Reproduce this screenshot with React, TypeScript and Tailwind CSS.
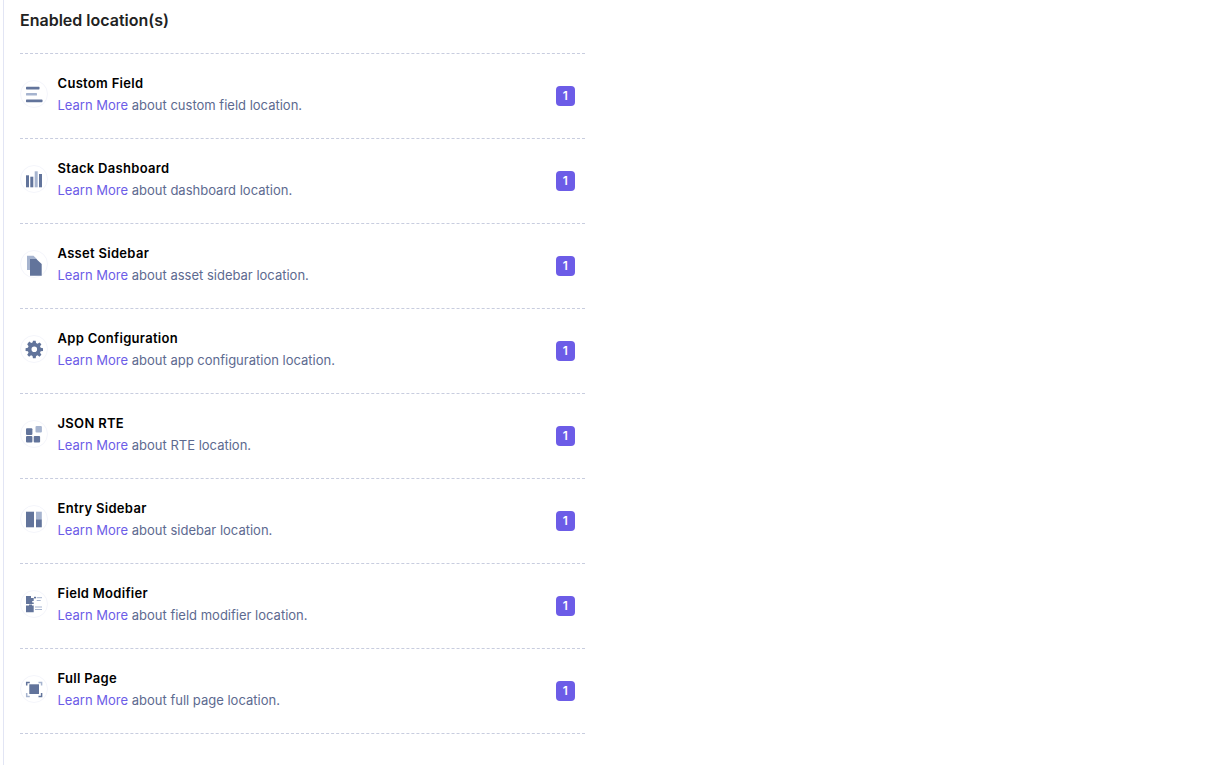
const dark = "#62749b";
const light = "#a6b4cf";

const icons: Record<string, React.ReactNode> = {
  field: (
    <>
      <rect x="6" y="6.8" width="13.5" height="2.6" rx="0.6" fill={dark} />
      <rect x="6" y="13" width="11" height="2.6" rx="0.6" fill={light} />
      <rect x="6" y="19.6" width="16.5" height="2.6" rx="0.6" fill={dark} />
    </>
  ),
  dashboard: (
    <>
      <rect x="6" y="10.3" width="3" height="12" fill={dark} />
      <rect x="10.3" y="11.7" width="3" height="10.6" fill={dark} />
      <rect x="14.7" y="6.3" width="3" height="16" fill={light} />
      <rect x="19" y="9" width="3" height="13.3" fill={dark} />
    </>
  ),
  asset: (
    <>
      <path d="M7 5.7h6.5L16.8 9v11H7z" fill={light} />
      <path d="M10 9h6.3l5.4 5v11.7H10z" fill={dark} />
    </>
  ),
  gear: (
    <path
      transform="translate(14.3 14.2) scale(0.8) translate(-14 -14.5)"
      fillRule="evenodd"
      d="M12.3 4h3.4l.5 2.9 1.9.8 2.4-1.7 2.4 2.4-1.7 2.4.8 1.9 2.9.5v3.4l-2.9.5-.8 1.9 1.7 2.4-2.4 2.4-2.4-1.7-1.9.8-.5 2.9h-3.4l-.5-2.9-1.9-.8-2.4 1.7-2.4-2.4 1.7-2.4-.8-1.9-2.9-.5v-3.4l2.9-.5.8-1.9-1.7-2.4L7.7 5l2.4 1.7 1.9-.8zM14 11a3.5 3.5 0 1 0 0 7 3.5 3.5 0 0 0 0-7z"
      fill={dark}
    />
  ),
  rte: (
    <>
      <rect x="6" y="8.3" width="6.4" height="6.6" rx="1" fill={dark} />
      <rect x="15.5" y="6" width="6.4" height="6.6" rx="1" fill={light} />
      <rect x="6" y="16" width="6.4" height="6.4" rx="1" fill={dark} />
      <rect x="13.7" y="16" width="6.4" height="6.4" rx="1" fill={dark} />
    </>
  ),
  sidebar: (
    <>
      <rect x="6" y="6.7" width="8" height="15.6" fill={dark} />
      <rect x="16" y="6.7" width="5.8" height="7.6" fill={light} />
      <rect x="16" y="14.3" width="5.8" height="8" fill={dark} />
    </>
  ),
  modifier: (
    <>
      <path d="M6 6h5v2h2.7v3h-1.5v1.5h1.5V14H6z" fill={dark} />
      <path d="M6 15.5h3v-1h3v1h1.7v6.8H6z" fill={dark} />
      <rect x="14" y="6.8" width="2" height="1.6" fill={dark} />
      <rect x="16.7" y="7.2" width="5.3" height="1" fill={light} />
      <rect x="16.7" y="10" width="4" height="1" fill={light} />
      <rect x="15" y="16.5" width="7" height="1" fill={light} />
      <rect x="15" y="19" width="7" height="1" fill={light} />
    </>
  ),
  page: (
    <>
      <rect x="9.3" y="9.3" width="9.7" height="9.7" fill={dark} />
      <path d="M6.7 10.5V7.4h3.1" fill="none" stroke={dark} strokeWidth="1.5" />
      <path d="M18.5 7.4h3.1v3.1" fill="none" stroke={light} strokeWidth="1.5" />
      <path d="M6.7 18v3.6h3.1" fill="none" stroke={light} strokeWidth="1.5" />
      <path d="M18.5 21.6h3.1V18" fill="none" stroke={dark} strokeWidth="1.5" />
    </>
  ),
};

const locations = [
  { name: "Custom Field", about: "custom field", icon: "field" },
  { name: "Stack Dashboard", about: "dashboard", icon: "dashboard" },
  { name: "Asset Sidebar", about: "asset sidebar", icon: "asset" },
  { name: "App Configuration", about: "app configuration", icon: "gear" },
  { name: "JSON RTE", about: "RTE", icon: "rte" },
  { name: "Entry Sidebar", about: "sidebar", icon: "sidebar" },
  { name: "Field Modifier", about: "field modifier", icon: "modifier" },
  { name: "Full Page", about: "full page", icon: "page" },
];

export default function App() {
  return (
    <div className="min-h-[765px] bg-white font-['Inter',sans-serif]">
      <div className="ml-[3px] min-h-[765px] w-[582px] border-l border-[#e2e5f4] pl-4">
        <h2 className="h-[53px] pt-[10px] text-[16px] leading-[20px] font-semibold text-[#222222]">
          Enabled location(s)
        </h2>
        <div className="border-t border-dashed border-[#c8cddf]">
          {locations.map((loc) => (
            <div
              key={loc.name}
              className="flex h-[85px] items-center justify-between border-b border-dashed border-[#c8cddf] pr-2.5"
            >
              <div className="flex items-center gap-[9.5px] pb-1">
                <svg width="28" height="28" viewBox="0 0 28 28" className="shrink-0">
                  <circle cx="14" cy="14" r="13.5" fill="#ffffff" stroke="#f4f5fb" />
                  {icons[loc.icon]}
                </svg>
                <div>
                  <div className="text-[13px] leading-[20px] font-semibold tracking-[0.3px] text-black">
                    {loc.name}
                  </div>
                  <div className="mt-0.5 text-[13px] leading-[20px] text-[#5d6a90]">
                    <a className="text-[#6c5ce7]">Learn More</a> about {loc.about} location.
                  </div>
                </div>
              </div>
              <span className="flex h-5 w-[19.5px] items-center justify-center rounded-[4px] bg-[#6c5ce7] text-[12px] font-semibold text-white">
                1
              </span>
            </div>
          ))}
        </div>
      </div>
    </div>
  );
}
